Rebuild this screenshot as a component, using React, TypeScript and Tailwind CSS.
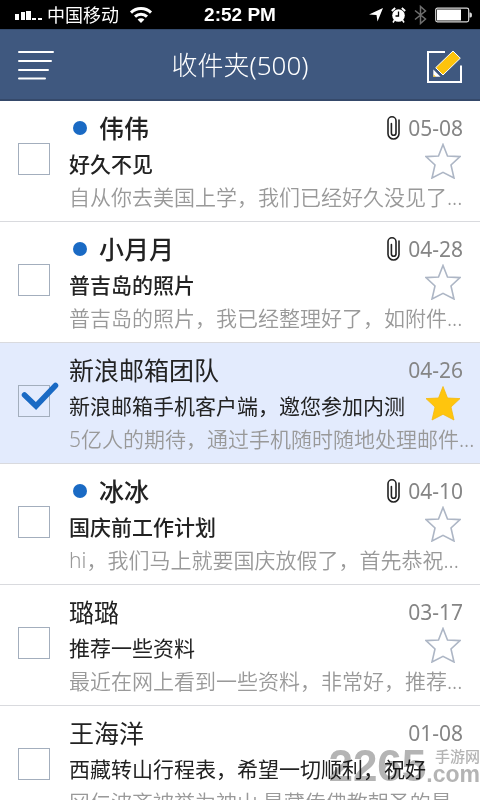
import { useState } from "react";

type Mail = {
  id: number;
  sender: string;
  subject: string;
  preview: string;
  date: string;
  unread?: boolean;
  attachment?: boolean;
  hideStar?: boolean;
};

const mails: Mail[] = [
  { id: 1, sender: "伟伟", subject: "好久不见", preview: "自从你去美国上学，我们已经好久没见了...", date: "05-08", unread: true, attachment: true },
  { id: 2, sender: "小月月", subject: "普吉岛的照片", preview: "普吉岛的照片，我已经整理好了，如附件...", date: "04-28", unread: true, attachment: true },
  { id: 3, sender: "新浪邮箱团队", subject: "新浪邮箱手机客户端，邀您参加内测", preview: "5亿人的期待，通过手机随时随地处理邮件...", date: "04-26" },
  { id: 4, sender: "冰冰", subject: "国庆前工作计划", preview: "hi，我们马上就要国庆放假了，首先恭祝...", date: "04-10", unread: true, attachment: true },
  { id: 5, sender: "璐璐", subject: "推荐一些资料", preview: "最近在网上看到一些资料，非常好，推荐...", date: "03-17" },
  { id: 6, sender: "王海洋", subject: "西藏转山行程表，希望一切顺利，祝好", preview: "冈仁波齐被誉为神山,是藏传佛教朝圣的最...", date: "01-08", hideStar: true },
];

function StatusBar() {
  return (
    <div className="grid h-[29px] shrink-0 grid-cols-3 items-center bg-black px-2 text-white">
      <div className="flex items-center pl-[7px]">
        <svg width="28" height="10" viewBox="0 0 28 10" fill="currentColor" aria-hidden="true">
          <rect x="0" y="4" width="4" height="6" />
          <rect x="6" y="2" width="4" height="8" />
          <rect x="11" y="1" width="5" height="9" />
          <rect x="17" y="8" width="4" height="2" />
          <rect x="23" y="8" width="4" height="2" />
        </svg>
        <span className="ml-1 text-lg leading-6 whitespace-nowrap">中国移动</span>
        <svg className="ml-2.5 shrink-0" width="24" height="17" viewBox="0 0 24 17" fill="none" stroke="currentColor" strokeWidth="3" aria-hidden="true">
          <path d="M2 6.6a14.4 14.4 0 0 1 20 0" />
          <path d="M6 10.7a8.7 8.7 0 0 1 12 0" />
          <path d="M12 17l-3.4-3.4a4.8 4.8 0 0 1 6.8 0z" fill="currentColor" stroke="none" />
        </svg>
      </div>
      <div className="text-center font-['Liberation_Sans',sans-serif] text-[19px] leading-6 font-bold whitespace-nowrap">2:52 PM</div>
      <div className="flex items-center justify-end">
        <svg width="14" height="14" viewBox="0 0 14 14" fill="currentColor" aria-hidden="true">
          <path d="M14 0L8.500 13.500 7.500 7 0 6.500z" />
        </svg>
        <svg className="ml-2" width="15" height="16" viewBox="0 0 15 16" aria-hidden="true">
          <circle cx="7.500" cy="8.500" r="6.300" fill="white" />
          <path d="M0.800 4L4.200 1M14.200 4L10.800 1" stroke="white" strokeWidth="1.800" />
          <path d="M7.500 4.500V9H4.500" fill="none" stroke="black" strokeWidth="1.300" />
          <path d="M3.500 13L2 15.500M11.500 13l1.500 2.500" stroke="white" strokeWidth="1.500" />
        </svg>
        <svg className="ml-2" width="13" height="20" viewBox="0 0 13 20" fill="none" stroke="#6f6f6f" strokeWidth="1.500" aria-hidden="true">
          <path d="M1 5.500l10.500 8.500L6.500 18.500V1.500l5 4.500L1 14.500" />
        </svg>
        <svg className="ml-2" width="37" height="16" viewBox="0 0 37 16" aria-hidden="true">
          <rect x="0.700" y="1.200" width="33" height="13.600" rx="1.800" fill="none" stroke="#d8d8d8" strokeWidth="1.200" />
          <rect x="2" y="2.500" width="24" height="11" fill="white" />
          <path d="M34.500 5.500h1a1.500 2.500 0 0 1 0 5h-1z" fill="#d8d8d8" />
        </svg>
      </div>
    </div>
  );
}

function Header() {
  return (
    <header className="flex h-[72px] shrink-0 items-center justify-between border-t border-b-2 border-t-[#354b6d] border-b-[#35496a] bg-[#3f587f] px-[18px] text-white">
      <button type="button" aria-label="菜单">
        <svg width="36" height="30" viewBox="0 0 36 30" stroke="currentColor" strokeWidth="2" strokeLinecap="round" aria-hidden="true">
          <path d="M1 2h34M1 11h32M1 20h29M1 28.500h26" />
        </svg>
      </button>
      <h1 className="text-[26px] leading-9 font-light">
        收件夹<span className="font-[350]">(500)</span>
      </h1>
      <button type="button" aria-label="写邮件" className="pt-1">
        <svg width="36" height="34" viewBox="0 0 36 34" aria-hidden="true">
          <path d="M19 2H2v30h33V15.500" fill="none" stroke="white" strokeWidth="2" />
          <path d="M27 1l7.300 7.200L17 25l-7.300-7.300z" fill="#fdc30c" stroke="white" strokeWidth="1" />
          <path d="M7.300 19.500l7.200 7.300H7.300z" fill="white" />
          <path d="M7.500 24.500l2.500 2.300H7.500z" fill="#fdc30c" />
        </svg>
      </button>
    </header>
  );
}

function Paperclip() {
  return (
    <svg width="13" height="24" viewBox="0 0 13 24" fill="none" stroke="#222" strokeWidth="1.600" strokeLinecap="round" role="img" aria-label="附件">
      <path d="M12 4v13.500a5.500 5.500 0 0 1-11 0V4.800a3.900 3.900 0 0 1 8 0V17a2.200 2.200 0 0 1-4.600 0V7.500" />
    </svg>
  );
}

function Star({ filled }: { filled: boolean }) {
  return (
    <svg width="36" height="36" viewBox="0 0 36 36" aria-hidden="true">
      <path
        d="M18 1.500l4.500 11.500 12.500.6-9 8.400 3 13-11-5.700L7 35l3-13-9-8.400 12.500-.6z"
        fill={filled ? "#ffc50d" : "none"}
        stroke={filled ? "#f5b90c" : "#adb6c5"}
        strokeWidth={filled ? 0.8 : 1.6}
      />
    </svg>
  );
}

function MailRow({ mail }: { mail: Mail }) {
  const [selected, setSelected] = useState(mail.id === 3);
  const [starred, setStarred] = useState(mail.id === 3);
  return (
    <li className={`flex h-[121px] border-b border-[#d9dade] pr-[17px] pl-[18px] ${selected ? "bg-[#e3ebfd]" : "bg-white"}`}>
      <div className="relative mt-[42px] mr-[19px] size-8 shrink-0">
        <input
          type="checkbox"
          aria-label={`选择 ${mail.sender}`}
          checked={selected}
          onChange={(e) => setSelected(e.target.checked)}
          className="block size-8 appearance-none border border-[#a3aebd]"
        />
        {selected && (
          <svg className="pointer-events-none absolute -top-1 left-0" width="44" height="36" viewBox="0 0 44 36" fill="none" stroke="#1a6ac4" strokeWidth="5.500" strokeLinecap="round" aria-hidden="true">
            <path d="M6.500 14l11.500 11L37.500 4.500" />
          </svg>
        )}
      </div>
      <div className="min-w-0 flex-1 pt-3">
        <div className="flex h-[30px] items-center">
          {mail.unread && <span className="mr-3 ml-1 size-3.5 shrink-0 rounded-full bg-[#1a6ac4]" />}
          <span className={`flex-1 text-[25px] leading-[30px] text-[#222] ${mail.unread ? "font-medium" : ""}`}>{mail.sender}</span>
          {mail.attachment && <Paperclip />}
          <time className="ml-2 text-[21px] leading-[30px] text-[#858585]">{mail.date}</time>
        </div>
        <div className="flex h-9 items-end">
          <span className={`flex-1 text-[21px] leading-[30px] whitespace-nowrap text-[#222] ${mail.unread ? "font-medium" : ""}`}>{mail.subject}</span>
          {!mail.hideStar && (
            <button type="button" aria-label="星标" aria-pressed={starred} onClick={() => setStarred(!starred)} className="mr-0.5">
              <Star filled={starred} />
            </button>
          )}
        </div>
        <p className="mt-1 text-[21px] leading-7 font-[350] whitespace-nowrap text-[#999]">{mail.preview}</p>
      </div>
    </li>
  );
}

function Watermark() {
  return (
    <div className="pointer-events-none absolute right-0 bottom-3 flex items-end text-[#b4b4b4] mix-blend-multiply">
      <span className="font-['Liberation_Sans',sans-serif] text-[44px] leading-[44px] font-bold">2265</span>
      <span className="flex flex-col items-end pb-1">
        <span className="text-[15px] leading-4 font-medium">手游网</span>
        <span className="font-['Liberation_Sans',sans-serif] text-[23px] leading-5 font-bold">.com</span>
      </span>
    </div>
  );
}

export default function App() {
  return (
    <div className="relative flex h-screen flex-col overflow-hidden bg-white font-['Noto_Sans','Noto_Sans_CJK_SC',sans-serif]">
      <StatusBar />
      <Header />
      <main className="min-h-0 flex-1 overflow-hidden">
        <ul>
          {mails.map((mail) => (
            <MailRow key={mail.id} mail={mail} />
          ))}
        </ul>
      </main>
      <Watermark />
    </div>
  );
}
